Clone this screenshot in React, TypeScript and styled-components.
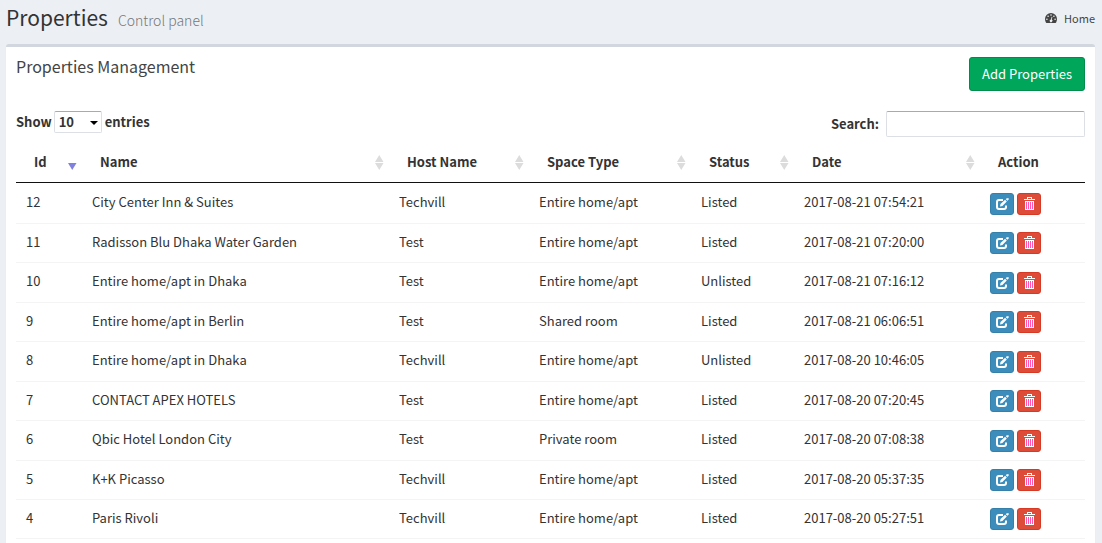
import React from "react";
import styled, { createGlobalStyle } from "styled-components";

const GlobalStyle = createGlobalStyle`
  *, *::before, *::after { box-sizing: border-box; }
  body {
    margin: 0;
    background: #ecf0f5;
    color: #333;
    font-family: "Source Sans Pro", "Noto Sans CJK SC", sans-serif;
    font-size: 13px;
    line-height: 20px;
  }
  button, input, select { font: inherit; color: inherit; }
`;

const Page = styled.main`
  padding: 0 7px 0 6px;
  height: 100vh;
  overflow: hidden;
`;

const PageHeader = styled.header`
  display: flex;
  align-items: center;
  justify-content: space-between;
  height: 44px;
  padding-bottom: 8px;
`;

const PageTitle = styled.h1`
  margin: 0;
  font-size: 21px;
  font-weight: 400;
  line-height: 32px;
`;

const Subtitle = styled.small`
  margin-left: 10px;
  color: #777;
  font-size: 14px;
  font-weight: 300;
`;

const HomeLink = styled.a`
  display: flex;
  align-items: center;
  gap: 7px;
  color: #444;
  font-size: 11px;
  text-decoration: none;
`;

const Panel = styled.section`
  padding: 10px;
  border-top: 3px solid #d2d6de;
  border-radius: 3px;
  background: #fff;
  box-shadow: 0 1px 1px rgba(0, 0, 0, 0.1);
`;

const PanelHeader = styled.div`
  display: flex;
  align-items: flex-start;
  justify-content: space-between;
`;

const PanelTitle = styled.h2`
  margin: 0;
  color: #444;
  font-size: 16px;
  font-weight: 400;
  line-height: 18px;
`;

const AddButton = styled.button`
  height: 34px;
  padding: 0 12px;
  border: 1px solid #008d4c;
  border-radius: 3px;
  background: #00a65a;
  color: #fff;
  cursor: pointer;
`;

const Controls = styled.div`
  display: flex;
  align-items: flex-start;
  justify-content: space-between;
  margin-top: 20px;
  font-weight: 700;
`;

const ControlLabel = styled.label`
  display: flex;
  align-items: center;
`;

const SelectWrap = styled.span`
  position: relative;
  margin: 0 3px 0 2px;

  svg {
    position: absolute;
    top: 10px;
    right: 4px;
    pointer-events: none;
  }
`;

const LengthSelect = styled.select`
  display: block;
  appearance: none;
  width: 48px;
  height: 22px;
  padding: 0 4px;
  border: 1px solid #dcdfe6;
  border-top-color: #aaa;
  border-radius: 2px;
  background: #fff;
`;

const SearchInput = styled.input`
  width: 199px;
  height: 26px;
  margin-left: 7px;
  padding: 0 5px;
  border: 1px solid #dcdfe6;
  border-top-color: #aaa;
  border-radius: 2px;
  background: #fff;
  font-weight: 400;
`;

const Table = styled.table`
  width: 100%;
  margin-top: 5px;
  table-layout: fixed;
  border-collapse: separate;
  border-spacing: 0;
`;

const HeadCell = styled.th<{ $width?: number }>`
  width: ${({ $width }) => ($width ? `${$width}px` : "auto")};
  height: 41px;
  padding: 0 5px 0 18px;
  border-bottom: 1px solid #111;
  text-align: left;
`;

const HeadContent = styled.div`
  display: flex;
  align-items: center;
  justify-content: space-between;
`;

const Cell = styled.td`
  padding: 0 10px 3px;
  border-top: 1px solid #f4f4f4;
  white-space: nowrap;
`;

const Row = styled.tr`
  height: 40px;

  &:nth-child(even) { height: 39px; }
  &:first-child ${Cell} { border-top-color: transparent; }
  &:last-child ${Cell} { border-bottom: 1px solid #f4f4f4; }
`;

const Actions = styled.div`
  display: flex;
  gap: 3px;
  padding-top: 3px;
`;

const IconButton = styled.button<{ $danger?: boolean }>`
  display: flex;
  align-items: center;
  justify-content: center;
  width: 24px;
  height: 22px;
  padding: 0;
  border: 1px solid ${({ $danger }) => ($danger ? "#d73925" : "#367fa9")};
  border-radius: 3px;
  background: ${({ $danger }) => ($danger ? "#dd4b39" : "#3c8dbc")};
  color: #fff;
  cursor: pointer;
`;

const DashboardIcon = () => (
  <svg width="12" height="12" viewBox="0 0 12 12" aria-hidden="true">
    <path d="M6 1a6 6 0 0 0-6 6c0 1.300.300 2.500.9 3.500.1.300.3.500.6.500h9c.3 0 .5-.2.6-.5.6-1 .9-2.200.9-3.500a6 6 0 0 0-6-6z" fill="#444" />
    <g fill="#ecf0f5">
      <circle cx="1.900" cy="7.200" r=".8" />
      <circle cx="3.100" cy="4.200" r=".8" />
      <circle cx="6" cy="3" r=".8" />
      <circle cx="8.900" cy="4.200" r=".8" />
      <circle cx="10.100" cy="7.200" r=".8" />
      <path d="M6.600 4.700l.8.200-.6 2.700a1.400 1.400 0 1 1-.8-.2z" />
    </g>
  </svg>
);

const SortIcon = ({ active }: { active?: boolean }) => (
  <svg width="10" height="16" viewBox="0 0 10 16" aria-hidden="true">
    {active ? (
      <path d="M1 9h8.500L5.250 16z" fill="#8080e0" />
    ) : (
      <path d="M1 8h8.500L5.250 1zM1 9h8.500L5.250 16z" fill="#dcdcdc" />
    )}
  </svg>
);

const EditIcon = () => (
  <svg width="14" height="12" viewBox="0 0 14 12" aria-hidden="true">
    <path d="M8 2H4A2 2 0 0 0 2 4V9A2 2 0 0 0 4 11H9A2 2 0 0 0 11 9V7.500" fill="none" stroke="#fff" strokeWidth="2" />
    <path d="M5 8.500l.5-2.500 4.600-4.200 1.700 1.700L7.400 8zM10.800 1.200l.9-.9h2v1.200l-1.200 1.300z" fill="#fff" />
  </svg>
);

const TrashIcon = () => (
  <svg width="12" height="14" viewBox="0 0 12 14" shapeRendering="crispEdges" aria-hidden="true">
    <path d="M3 5h7v7H3z" fill="#ff52b4" />
    <path d="M1 2h11v1H1zM4 0h5v2H8V1H5v1H4zM2 4h9v1H2zM2 12h9v1H2zM2 5h1v7H2zM4 5h1v7H4zM6 5h1v7H6zM8 5h1v7H8zM10 5h1v7h-1z" fill="#fff" />
  </svg>
);

const columns = [
  { title: "Id", width: 66 },
  { title: "Name" },
  { title: "Host Name", width: 140 },
  { title: "Space Type", width: 162 },
  { title: "Status", width: 103 },
  { title: "Date", width: 186 },
  { title: "Action", width: 105 },
];

const properties = [
  [12, "City Center Inn & Suites", "Techvill", "Entire home/apt", "Listed", "2017-08-21 07:54:21"],
  [11, "Radisson Blu Dhaka Water Garden", "Test", "Entire home/apt", "Listed", "2017-08-21 07:20:00"],
  [10, "Entire home/apt in Dhaka", "Test", "Entire home/apt", "Unlisted", "2017-08-21 07:16:12"],
  [9, "Entire home/apt in Berlin", "Test", "Shared room", "Listed", "2017-08-21 06:06:51"],
  [8, "Entire home/apt in Dhaka", "Techvill", "Entire home/apt", "Unlisted", "2017-08-20 10:46:05"],
  [7, "CONTACT APEX HOTELS", "Test", "Entire home/apt", "Listed", "2017-08-20 07:20:45"],
  [6, "Qbic Hotel London City", "Test", "Private room", "Listed", "2017-08-20 07:08:38"],
  [5, "K+K Picasso", "Techvill", "Entire home/apt", "Listed", "2017-08-20 05:37:35"],
  [4, "Paris Rivoli", "Techvill", "Entire home/apt", "Listed", "2017-08-20 05:27:51"],
];

export default function App() {
  return (
    <Page>
      <GlobalStyle />
      <PageHeader>
        <PageTitle>
          Properties<Subtitle>Control panel</Subtitle>
        </PageTitle>
        <HomeLink href="#">
          <DashboardIcon />
          Home
        </HomeLink>
      </PageHeader>
      <Panel>
        <PanelHeader>
          <PanelTitle>Properties Management</PanelTitle>
          <AddButton type="button">Add Properties</AddButton>
        </PanelHeader>
        <Controls>
          <ControlLabel htmlFor="page-length">
            Show
            <SelectWrap>
              <LengthSelect id="page-length" defaultValue="10">
                <option>10</option>
                <option>25</option>
                <option>50</option>
                <option>100</option>
              </LengthSelect>
              <svg width="8" height="4" viewBox="0 0 8 4" aria-hidden="true">
                <path d="M0 0h8L4 4z" fill="#000" />
              </svg>
            </SelectWrap>
            entries
          </ControlLabel>
          <ControlLabel htmlFor="table-search">
            Search:
            <SearchInput id="table-search" type="search" />
          </ControlLabel>
        </Controls>
        <Table>
          <thead>
            <tr>
              {columns.map(({ title, width }) => (
                <HeadCell key={title} scope="col" $width={width}>
                  <HeadContent>
                    {title}
                    {title !== "Action" && <SortIcon active={title === "Id"} />}
                  </HeadContent>
                </HeadCell>
              ))}
            </tr>
          </thead>
          <tbody>
            {properties.map((property) => (
              <Row key={property[0]}>
                {property.map((value, index) => (
                  <Cell key={index}>{value}</Cell>
                ))}
                <Cell>
                  <Actions>
                    <IconButton type="button" aria-label="Edit">
                      <EditIcon />
                    </IconButton>
                    <IconButton type="button" aria-label="Delete" $danger>
                      <TrashIcon />
                    </IconButton>
                  </Actions>
                </Cell>
              </Row>
            ))}
          </tbody>
        </Table>
      </Panel>
    </Page>
  );
}
